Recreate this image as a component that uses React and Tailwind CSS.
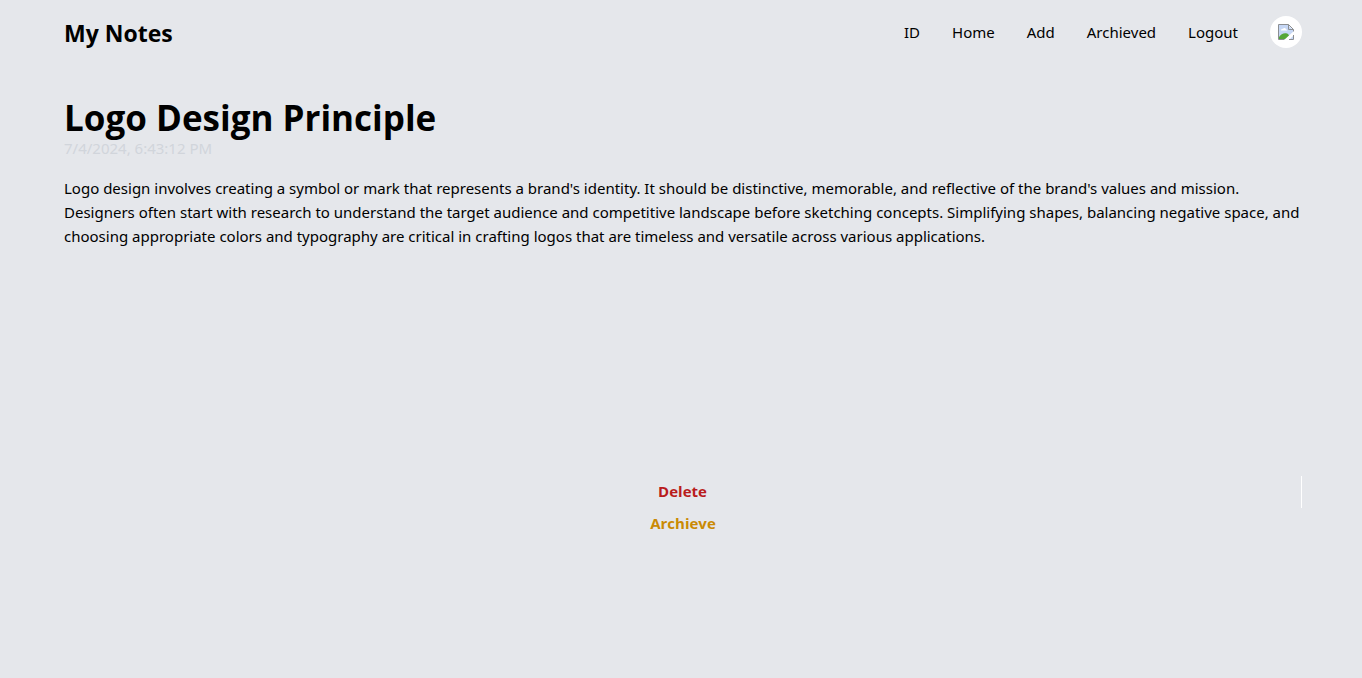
export default function App() {
  return (
    <div className="min-h-screen bg-[#e5e7eb] pr-15 pl-16 font-['Noto_Sans','Open_Sans',sans-serif] text-[15px] leading-6 text-black">
      <header className="flex h-16 items-center justify-between">
        <h1 className="pt-0.5 font-['Open_Sans',sans-serif] text-[23px] leading-8 font-bold">My Notes</h1>
        <nav className="flex items-center gap-8">
          <button type="button">ID</button>
          <a href="#home">Home</a>
          <a href="#add">Add</a>
          <a href="#archived">Archieved</a>
          <button type="button">Logout</button>
          <button type="button" aria-label="Profile" className="flex size-8 items-center justify-center rounded-full bg-white">
            <svg width="16" height="16" viewBox="0 0 16 16" aria-hidden="true">
              <path d="M1 1h9l5 5v9H1z" fill="#c6d7f5" />
              <path d="M3 6.5c0-1.2 1-2 2-1.7C5.5 3.500 8 3.700 8 5.500c1 0 1.300.5 1.300 1H3z" fill="#fff" />
              <path d="M1 15v-2c2-3 5-4.500 8-3.500 1.500.5 2.500 2 3 5.500z" fill="#55a638" />
              <path d="M6 16L16 7v4l-5 5z" fill="#fff" />
              <path d="M6.500 15.500h-6V.5h10l5 5v2M10.500.5v5h5M15.500 11v4.500h-4.500" fill="none" stroke="#8b8e92" />
            </svg>
          </button>
        </nav>
      </header>
      <main className="pt-9">
        <h2 className="font-['Open_Sans',sans-serif] text-[35px] leading-9 font-bold">Logo Design Principle</h2>
        <p className="text-[#d1d5db]">7/4/2024, 6:43:12 PM</p>
        <p className="mt-4 min-h-75">
          Logo design involves creating a symbol or mark that represents a brand's identity. It should be distinctive, memorable, and reflective of the brand's values and mission. Designers often start with research to understand the target audience and competitive landscape before sketching concepts. Simplifying shapes, balancing negative space, and choosing appropriate colors and typography are critical in crafting logos that are timeless and versatile across various applications.
        </p>
        <div className="flex flex-col font-['Open_Sans',sans-serif] font-bold">
          <button type="button" className="h-8 border-r border-white pb-0.5 text-[#b91c1c]">Delete</button>
          <button type="button" className="h-8 pb-0.5 text-[#ca8a04]">Archieve</button>
        </div>
      </main>
    </div>
  );
}
